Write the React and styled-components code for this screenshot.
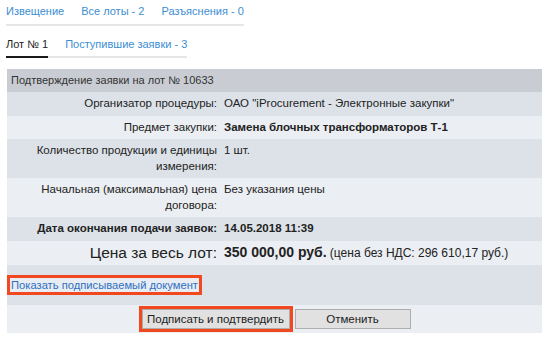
import styled, { createGlobalStyle } from 'styled-components'

const Global = createGlobalStyle`
  body {
    margin: 0;
    background: #fff;
    font-family: "Liberation Sans", Arial, sans-serif;
    font-size: 11px;
    color: #222;
  }
`

const Page = styled.div`
  padding: 4px 8px 0 6px;
  width: 550px;
  box-sizing: border-box;
`

const Tabs = styled.div`
  display: inline-flex;
  gap: 17px;
  border-bottom: 2px solid #e6e6e6;
  margin-bottom: ${p => p.$mb || 0}px;
`

const Tab = styled.a`
  display: block;
  padding: 0 0 ${p => p.$pb || 6}px;
  color: ${p => (p.$active ? '#222' : '#3b8ed3')};
  text-decoration: none;
  font-size: 11px;
  line-height: 14px;
  margin-bottom: -2px;
  border-bottom: 2px solid ${p => (p.$active ? '#1a1a1a' : 'transparent')};
  cursor: pointer;
`

const Panel = styled.div`
  margin-left: 1px;
  width: 535px;
`

const Header = styled.div`
  background: #c9cdd3;
  color: #333;
  padding: 0 4px;
  height: 23px;
  line-height: 23px;
  font-size: 11px;
`

const Row = styled.div`
  display: grid;
  grid-template-columns: 210px 1fr;
  column-gap: 7px;
  background: ${p => (p.$alt ? '#ebeef2' : '#dde2e9')};
  padding: 4px 0;
  line-height: 15.5px;
  font-size: 11.5px;
  font-weight: ${p => (p.$bold ? 'bold' : 'normal')};
`

const Label = styled.div`
  text-align: right;
  white-space: nowrap;
  font-size: ${p => (p.$big ? 15.5 : 11.5)}px;
`

const Value = styled.div`
  font-weight: ${p => (p.$bold ? 'bold' : 'inherit')};
  white-space: nowrap;
`

const Price = styled.b`
  font-size: 14px;
`

const Note = styled.span`
  font-size: 12px;
`

const LinkRow = styled.div`
  background: #dde2e9;
  height: 40px;
  display: flex;
  align-items: center;
`

const Highlight = styled.div`
  border: 3px solid #f1481f;
  display: flex;
  align-items: center;
`

const DocLink = styled.a`
  display: block;
  background: #e8edf4;
  color: #2f6fc0;
  padding: 0 1px 0 1px;
  font-size: 11.2px;
  line-height: 14px;
  text-decoration: none;
  cursor: pointer;
`

const ButtonRow = styled.div`
  background: #ebeef2;
  height: 28px;
  display: flex;
  justify-content: center;
  align-items: center;
  gap: 2px;
`

const Button = styled.button`
  font-family: "Liberation Sans", Arial, sans-serif;
  font-size: 11.5px;
  color: #222;
  background: #e1e1e1;
  border: 1px solid #adadad;
  height: 20px;
  width: ${p => p.$w}px;
  padding: 0;
  cursor: pointer;
`

export default function App() {
  return (
    <Page>
      <Global />
      <Tabs $mb={11}>
        <Tab $pb={6}>Извещение</Tab>
        <Tab $pb={6}>Все лоты - 2</Tab>
        <Tab $pb={6}>Разъяснения - 0</Tab>
      </Tabs>
      <div>
        <Tabs $mb={11}>
          <Tab $active $pb={5}>Лот № 1</Tab>
          <Tab $pb={5}>Поступившие заявки - 3</Tab>
        </Tabs>
      </div>
      <Panel>
        <Header>Подтверждение заявки на лот № 10633</Header>
        <Row>
          <Label>Организатор процедуры:</Label>
          <Value>ОАО "iProcurement - Электронные закупки"</Value>
        </Row>
        <Row $alt>
          <Label>Предмет закупки:</Label>
          <Value $bold>Замена блочных трансформаторов Т-1</Value>
        </Row>
        <Row>
          <Label>Количество продукции и единицы<br />измерения:</Label>
          <Value>1 шт.</Value>
        </Row>
        <Row $alt>
          <Label>Начальная (максимальная) цена<br />договора:</Label>
          <Value>Без указания цены</Value>
        </Row>
        <Row $bold>
          <Label>Дата окончания подачи заявок:</Label>
          <Value>14.05.2018 11:39</Value>
        </Row>
        <Row $alt>
          <Label $big>Цена за весь лот:</Label>
          <Value><Price>350 000,00 руб.</Price> <Note>(цена без НДС: 296 610,17 руб.)</Note></Value>
        </Row>
        <LinkRow>
          <Highlight>
            <DocLink>Показать подписываемый документ</DocLink>
          </Highlight>
        </LinkRow>
        <ButtonRow>
          <Highlight>
            <Button $w={148}>Подписать и подтвердить</Button>
          </Highlight>
          <Button $w={116}>Отменить</Button>
        </ButtonRow>
      </Panel>
    </Page>
  )
}
